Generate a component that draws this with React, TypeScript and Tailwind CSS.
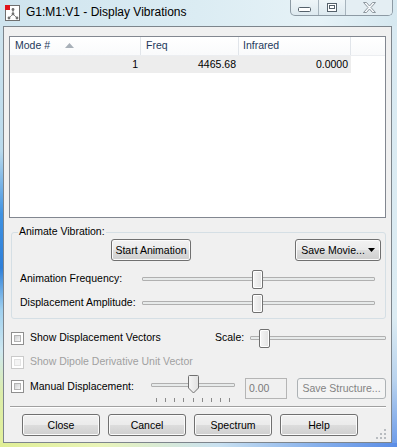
import React from 'react';

const font = "font-['Liberation_Sans',Arial,sans-serif]";

const Check = ({ disabled }: { disabled?: boolean }) => (
  <div className={`w-[13px] h-[13px] shrink-0 border p-[2px] bg-white ${disabled ? 'border-[#cacaca]' : 'border-[#8f8f8f]'}`}>
    <div className={`w-full h-full border ${disabled ? 'border-[#e3e3e3] bg-[#f4f4f4]' : 'border-[#b3b3b3] bg-[linear-gradient(135deg,#cfd1d3,#f7f7f7)]'}`} />
  </div>
);

const Btn = ({ children, className = '' }: any) => (
  <button className={`h-[22px] rounded-[3px] border border-[#707070] bg-[linear-gradient(#f2f2f2_0%,#ebebeb_48%,#dddddd_50%,#cfcfcf_100%)] shadow-[inset_0_0_0_1px_#fbfbfb] text-[10.5px] leading-none text-black ${className}`}>
    {children}
  </button>
);

const Thumb = () => (
  <div className="absolute top-[-8px] w-[11px] h-[19px] rounded-[2px] border border-[#707070] bg-[linear-gradient(90deg,#f6f6f6,#e2e2e2)] shadow-[inset_0_0_0_1px_#ffffff]" />
);

const Track = ({ className = '', children }: any) => (
  <div className={`relative h-[4px] rounded-[1px] border border-[#b0b0b0] bg-[#e7eaea] ${className}`}>
    {children}
  </div>
);

const SliderRow = ({ label }: { label: string }) => (
  <div className="h-[24px] flex items-center pl-[8px] pr-[10px]">
    <span className="w-[122px] text-[10.5px]">{label}</span>
    <Track className="flex-1">
      <div className="absolute left-[109px]"><Thumb /></div>
    </Track>
  </div>
);

const TitleIcon = () => (
  <svg width="16" height="16" viewBox="0 0 16 16">
    <rect x="0.5" y="0.5" width="14" height="15" fill="#fff" stroke="#6f6f6f" />
    <line x1="8" y1="5" x2="8" y2="9" stroke="#8a8a8a" />
    <line x1="8" y1="9" x2="4.5" y2="12.5" stroke="#8a8a8a" />
    <line x1="8" y1="9" x2="11.5" y2="12.5" stroke="#8a8a8a" />
    <circle cx="8" cy="4.5" r="1.4" fill="#707070" />
    <circle cx="8" cy="9" r="1.4" fill="#707070" />
    <circle cx="4" cy="13" r="1.4" fill="#707070" />
    <circle cx="12" cy="13" r="1.4" fill="#707070" />
    <rect x="0" y="0" width="5" height="5" fill="#e0141b" />
  </svg>
);

const CaptionButtons = () => (
  <div className="flex h-[16px] mr-[4px] rounded-b-[5px] border border-t-0 border-[#8d9aa4] bg-[linear-gradient(#eef5f8,#dde9ef)] overflow-hidden">
    <div className="w-[28px] flex items-center justify-center border-r border-[#a7b4bd]">
      <svg width="13" height="5" viewBox="0 0 13 5" className="mt-[3px]">
        <rect x="0.5" y="0.5" width="12" height="4" rx="1" fill="#fff" stroke="#55616b" />
      </svg>
    </div>
    <div className="w-[27px] flex items-center justify-center border-r border-[#a7b4bd]">
      <svg width="10" height="9" viewBox="0 0 10 9">
        <rect x="0.5" y="0.5" width="9" height="8" fill="#fff" stroke="#55616b" />
        <rect x="2.5" y="2.5" width="5" height="3" fill="#fff" stroke="#55616b" />
      </svg>
    </div>
    <div className="w-[46px] flex items-start justify-center pt-[2px] bg-[#e4eef3]">
      <svg width="13" height="11" viewBox="0 0 13 11">
        <polygon points="0.5,0.5 3.5,0.5 6.5,4 9.5,0.5 12.5,0.5 8,5.5 12.5,10.5 9.5,10.5 6.5,7 3.5,10.5 0.5,10.5 5,5.5" fill="#f7fafc" stroke="#8e989f" strokeLinejoin="round" />
      </svg>
    </div>
  </div>
);

const SizeGrip = () => (
  <svg width="11" height="11" viewBox="0 0 11 11" className="absolute right-[4px] bottom-[2px]">
    {[[8, 0], [8, 4], [4, 4], [8, 8], [4, 8], [0, 8]].map(([x, y], i) => (
      <rect key={i} x={x} y={y} width="2" height="2" fill="#b8bcc0" />
    ))}
  </svg>
);

export default function App() {
  const ticks = [0, 1, 2, 3, 4, 5, 6, 7, 8];
  return (
    <div className={`w-[397px] h-[447px] flex flex-col overflow-hidden text-black ${font}`}>
      {/* title bar */}
      <div className="h-[26px] shrink-0 flex items-start bg-[linear-gradient(90deg,#cfe4ee_0%,#dbecf3_50%,#e6f2f7_80%,#d6e8f0_100%)]">
        <div className="ml-[5px] mt-[5px]"><TitleIcon /></div>
        <span className="ml-[5px] mt-[5px] text-[12px] leading-[14px]">G1:M1:V1 - Display Vibrations</span>
        <div className="ml-auto"><CaptionButtons /></div>
      </div>

      <div className="flex flex-1">
        <div className="w-[3px] bg-[linear-gradient(#cfe4ee_0%,#b9d9ec_30%,#3f92e2_45%,#2e7fd9_58%,#9fd0ef_68%,#cfe8f0_78%,#dcedaa_88%,#e2f09a_100%)]" />

        {/* client */}
        <div className="relative flex-1 flex flex-col border border-[#7d858c] bg-[#f0f0f0] px-[5px]">
          {/* list */}
          <div className="mt-[9px] h-[182px] border border-[#828790] bg-white">
            <div className="h-[19px] flex border-b border-[#eceef1] bg-[linear-gradient(#ffffff,#f9fafb)] text-[10.5px] text-[#1e395b]">
              <div className="w-[131px] flex items-center border-r border-[#e1e5ea] pl-[5px]">
                <span>Mode #</span>
                <svg width="9" height="5" viewBox="0 0 9 5" className="ml-[15px] mb-[1px]">
                  <polygon points="0,5 4.5,0 9,5" fill="#a8b0b8" />
                </svg>
              </div>
              <div className="w-[98px] flex items-center border-r border-[#e1e5ea] pl-[5px]">Freq</div>
              <div className="w-[112px] flex items-center border-r border-[#e1e5ea] pl-[4px]">Infrared</div>
              <div className="flex-1" />
            </div>
            <div className="h-[17px] w-[341px] flex items-center bg-[#ededed] text-[10.5px]">
              <div className="w-[131px] text-right pr-[3px]">1</div>
              <div className="w-[98px] text-right pr-[3px]">4465.68</div>
              <div className="w-[112px] text-right pr-[3px]">0.0000</div>
            </div>
          </div>

          {/* animate group */}
          <div className="relative mt-[14px] ml-[2px] h-[87px] rounded-[3px] border border-[#d5dfe5]">
            <span className="absolute left-[6px] top-[-8px] px-[1px] bg-[#f0f0f0] text-[10.5px] leading-[13px]">Animate Vibration:</span>
            <div className="mt-[6px] flex justify-between pl-[99px] pr-[4px]">
              <Btn className="w-[80px]">Start Animation</Btn>
              <Btn className="w-[86px] flex items-center justify-center gap-[3px]">
                <span>Save Movie...</span>
                <svg width="7" height="4" viewBox="0 0 7 4"><polygon points="0,0 7,0 3.5,4" fill="#000" /></svg>
              </Btn>
            </div>
            <div className="mt-[6px]">
              <SliderRow label="Animation Frequency:" />
              <SliderRow label="Displacement Amplitude:" />
            </div>
          </div>

          {/* checkbox rows */}
          <div className="mt-[7px] h-[24px] flex items-center pl-[2px] text-[10.5px]">
            <Check />
            <span className="ml-[6px] w-[185px]">Show Displacement Vectors</span>
            <span className="w-[35px]">Scale:</span>
            <Track className="w-[136px]">
              <div className="absolute left-[8px]"><Thumb /></div>
            </Track>
          </div>
          <div className="h-[24px] flex items-center pl-[2px] text-[10.5px] text-[#a0a0a0]">
            <Check disabled />
            <span className="ml-[6px]">Show Dipole Derivative Unit Vector</span>
          </div>
          <div className="h-[32px] flex items-start pl-[2px] text-[10.5px]">
            <div className="mt-[6px]"><Check /></div>
            <span className="ml-[6px] mt-[6px] w-[121px] leading-[13px]">Manual Displacement:</span>
            <div className="w-[84px] flex flex-col">
              <div className="mt-[9px] h-[16px]">
                <Track>
                  <div className="absolute left-[36px]">
                    <svg width="11" height="19" viewBox="0 0 11 19" className="absolute top-[-9px]">
                      <defs>
                        <linearGradient id="tg" x1="0" x2="1" y1="0" y2="0">
                          <stop offset="0" stopColor="#f6f6f6" />
                          <stop offset="1" stopColor="#e0e0e0" />
                        </linearGradient>
                      </defs>
                      <path d="M1.5 0.5 H9.5 Q10.5 0.5 10.5 1.5 V13 L5.5 18 L0.5 13 V1.5 Q0.5 0.5 1.5 0.5 Z" fill="url(#tg)" stroke="#707070" />
                    </svg>
                  </div>
                </Track>
              </div>
              <div className="mt-[-1px] h-[4px] flex justify-between px-[5px]">
                {ticks.map((t) => <div key={t} className="w-[1px] h-[4px] bg-[#8a8a8a]" />)}
              </div>
            </div>
            <div className="ml-[10px] mt-[4px] w-[42px] h-[21px] border border-[#b5b5b5] bg-[#f0f0f0] text-[#7a7a7a] flex items-center pl-[3px]">0.00</div>
            <button className="ml-[10px] mt-[4px] w-[89px] h-[21px] rounded-[3px] border border-[#adb2b5] bg-[#f4f4f4] text-[10.5px] text-[#838383]">Save Structure...</button>
          </div>

          {/* separator */}
          <div className="ml-[1px] h-[2px] border-t border-[#a0a0a0] bg-white" />

          {/* bottom buttons */}
          <div className="mt-[6px] flex gap-[8px] pl-[13px]">
            <Btn className="w-[78px]">Close</Btn>
            <Btn className="w-[78px]">Cancel</Btn>
            <Btn className="w-[78px]">Spectrum</Btn>
            <Btn className="w-[78px]">Help</Btn>
          </div>
          <SizeGrip />
        </div>

        <div className="w-[5px] bg-[linear-gradient(#d9eaf2_0%,#dcecf3_70%,#b9d3ee_85%,#6f9de9_100%)]" />
      </div>
      <div className="h-[4px] shrink-0 bg-[linear-gradient(90deg,#dfee95_0%,#e9f4b8_25%,#c9e1f1_55%,#86b0ec_80%,#5b8de6_100%)]" />
    </div>
  );
}
